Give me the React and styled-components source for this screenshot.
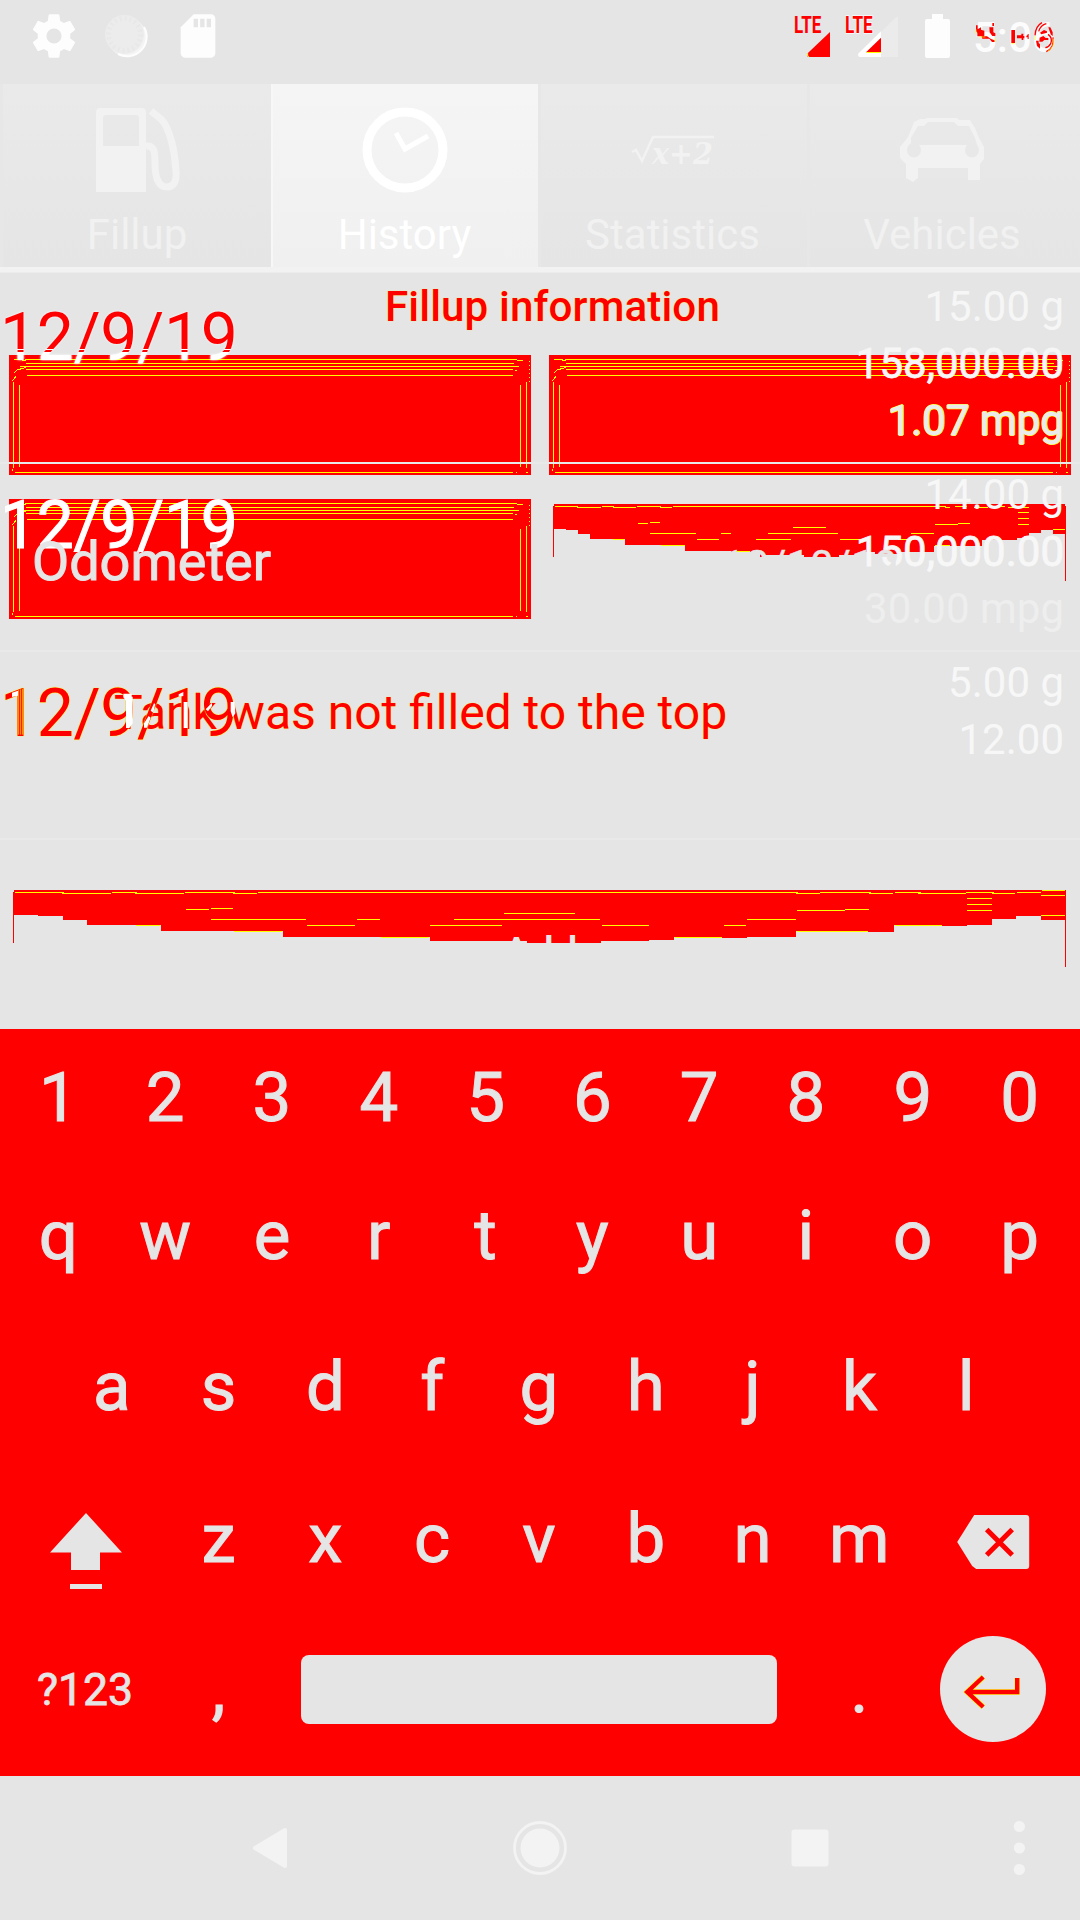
import React from "react";
import styled, { createGlobalStyle, css } from "styled-components";

const GREY = "#e5e5e5";
const RED = "#ff0000";
const YELLOW = "#ffff00";

const Global = createGlobalStyle`
  html, body { margin: 0; padding: 0; background: ${GREY}; }
  * { box-sizing: border-box; }
`;

const Screen = styled.div`
  width: 1080px;
  height: 1920px;
  display: flex;
  flex-direction: column;
  overflow: hidden;
  background: ${GREY};
  font-family: Roboto, "Noto Sans", sans-serif;
`;

/* status bar */
const StatusBar = styled.header`
  height: 84px;
  display: flex;
  justify-content: space-between;
`;
const Drawing = styled.svg`
  display: block;
  flex: none;
`;
const StatusRight = styled.div`
  display: flex;
  width: 300px;
`;
const Clock = styled.div`
  position: relative;
  width: 120px;
  padding-left: 13px;
  font-size: 42px;
  font-weight: 500;
  line-height: 76px;
  color: #fcfcfc;
  white-space: nowrap;
`;
const ClockMarks = styled.svg`
  position: absolute;
  left: 0;
  top: 0;
`;

/* tabs */
const Tabs = styled.nav`
  height: 192px;
  display: grid;
  grid-template-columns: 271px 267px 269px 273px;
  grid-template-rows: 183px 6px;
`;
const Tab = styled.div`
  display: flex;
  flex-direction: column;
  align-items: center;
  padding: 23px ${(p) => p.$right || 0}px 0 0;
  font-size: 42px;
  line-height: 50px;
  color: ${(p) => (p.$active ? "#ffffff" : "#f1f1f1")};
  background: ${(p) =>
    p.$active
      ? "linear-gradient(#f5f5f5, #f0f0f0)"
      : "linear-gradient(#eaeaea, #e7e7e7 60%, #e5e5e5)"};
  border-left: ${(p) => (p.$active ? "2px solid #f7f7f7" : "3px solid #e7e7e7")};
`;
const TabLabel = styled.span`
  margin-top: 17px;
`;
const Underline = styled.div`
  grid-column: 1 / -1;
  background: #f2f2f2;
  border-bottom: 1px solid #ececec;
`;

/* content */
const Content = styled.main`
  position: relative;
  height: 753px;
`;
const Form = styled.section`
  display: flex;
  flex-direction: column;
`;
const Title = styled.h1`
  margin: 0;
  height: 79px;
  padding: 6px 0 0 385px;
  font-size: 42px;
  font-weight: 500;
  line-height: 49px;
  letter-spacing: 0.2px;
  color: ${RED};
  text-shadow: 0 0 1px ${YELLOW};
  white-space: nowrap;
`;
const Fields = styled.div`
  display: grid;
  grid-template-columns: 522px 522px;
  grid-auto-rows: 120px;
  gap: 24px 18px;
  padding-left: 9px;
`;
const Cell = styled.div`
  display: grid;
  > * { grid-area: 1 / 1; }
`;
const FieldLabel = styled.span`
  z-index: 1;
  padding: 1px 0 0 23px;
  font-size: 54px;
  font-weight: 400;
  -webkit-text-stroke: 1px ${GREY};
  line-height: 123px;
  color: ${GREY};
`;
const DateLabel = styled.span`
  z-index: 1;
  text-align: center;
  font-size: 42px;
  line-height: 134px;
  color: ${GREY};
  -webkit-text-stroke: 0.4px ${GREY};
`;
const Note = styled.p`
  margin: 0;
  height: 271px;
  padding: 66px 0 0 114px;
  font-size: 48px;
  line-height: 56px;
  color: ${RED};
  text-shadow: 0 0 1px ${YELLOW};
  white-space: nowrap;
`;
const AddLabel = styled.span`
  z-index: 1;
  text-align: center;
  font-size: 42px;
  font-weight: 500;
  line-height: 126px;
  color: ${GREY};
`;

const List = styled.ul`
  position: absolute;
  inset: 0;
  margin: 0;
  padding: 0;
  list-style: none;
`;
const Row = styled.li`
  height: 188px;
  display: flex;
  justify-content: space-between;
  padding: 2px 16px 0 0;
  border-bottom: 2px solid #e9e9e9;
`;
const tones = {
  mixed: css`
    color: transparent;
    background: linear-gradient(${RED} 0 50px, #fff 50px 51px, ${RED} 51px 53px, #fff 53px);
    -webkit-background-clip: text;
    background-clip: text;
    filter: drop-shadow(0 0 0.8px #fff);
  `,
  white: css`
    color: #fff;
    -webkit-text-stroke: 1px #fff;
  `,
  red: css`
    color: ${RED};
    text-shadow: 0 0 1px ${YELLOW}, 0 0 1px ${YELLOW};
  `,
};
const RowDate = styled.div`
  height: 80px;
  margin-top: 21px;
  font-size: 66px;
  line-height: 78px;
  letter-spacing: -0.35px;
  ${(p) => tones[p.$tone]}
`;
const Values = styled.div`
  display: flex;
  flex-direction: column;
  align-items: flex-end;
  font-size: 42px;
  line-height: 57px;
`;
const Value = styled.span`
  color: ${(p) => p.$color};
  ${(p) => p.$bold && css`-webkit-text-stroke: 0.8px ${p.$color};`}
  ${(p) =>
    p.$glow &&
    css`
      text-shadow: 1px 0 0 ${YELLOW}, -1px 0 0 ${YELLOW}, 0 1px 0 ${YELLOW}, 0 -1px 0 ${YELLOW};
    `}
`;
const Overlaps = styled.svg`
  position: absolute;
  left: 0;
  top: 404px;
`;

/* keyboard */
const Keyboard = styled.section`
  height: 747px;
  background: ${RED};
  color: ${GREY};
  padding: 0 7px 0 5px;
`;
const KeyRow = styled.div`
  display: flex;
  align-items: center;
  height: ${(p) => p.$h}px;
  padding: 0 ${(p) => p.$inset || 0}px;
`;
const Key = styled.div`
  flex: none;
  width: ${(p) => (p.$wide ? 160.2 : 106.8)}px;
  display: flex;
  justify-content: center;
  align-items: center;
  font-size: ${(p) => (p.$small ? 44.5 : 69)}px;
  line-height: 82px;
  padding-top: ${(p) => (p.$small ? 2 : 0)}px;
  -webkit-text-stroke: ${(p) => (p.$small ? 0.8 : 1)}px ${GREY};
`;
const Space = styled.div`
  width: 476px;
  height: 69px;
  margin: 0 29px;
  border-radius: 8px;
  background: ${GREY};
`;
const Enter = styled.div`
  width: 106px;
  height: 106px;
  border-radius: 50%;
  background: ${GREY};
`;

const NavBar = styled.footer`
  height: 144px;
`;

const Spinner = () => (
  <Drawing width="522" height="120" viewBox="26 255 1516 360" preserveAspectRatio="none" shapeRendering="crispEdges">
    <rect x="26" y="255" width="1516" height="360" fill={RED} />
    <g fill="none" stroke={YELLOW} strokeWidth="3">
      <path d="M40 268.500H64V271H75V268.500H1493L1505 271H1520M75 280.500H1493M58 289.500H1506M75 298.500H1490M78 316.500H1490M78 607.500H1490M44 607.500H78M1498 607.500H1502M1527 607.500H1532" />
      <path d="M40 336V594M56.500 345V591M1511.500 345V591M1528.500 336V594M36 604V598M36 332L46 320M40 310L50 300L75 292M1495 300H1502" />
      <path d="M1537.500 272V335" strokeDasharray="4 8" />
    </g>
  </Drawing>
);

const rows = [
  {
    tone: "mixed",
    values: [
      { text: "15.00 g", color: "#f6f6f6" },
      { text: "158,000.00", color: "#f6f6f6", bold: true },
      { text: "1.07 mpg", color: "#ebebeb", glow: true, bold: true },
    ],
  },
  {
    tone: "white",
    values: [
      { text: "14.00 g", color: "#f7f7f7" },
      { text: "150,000.00", color: "#f7f7f7", bold: true },
      { text: "30.00 mpg", color: "#eeeeee" },
    ],
  },
  {
    tone: "red",
    values: [
      { text: "5.00 g", color: "#f7f7f7" },
      { text: "12.00", color: "#f7f7f7" },
    ],
  },
];

export default function App() {
  return (
    <Screen>
      <Global />
      <StatusBar>
        <Drawing width="300" height="84" viewBox="0 0 300 84">
          <g transform="translate(28 10) scale(2.167)" fill="#fdfdfd">
            <path d="M19.430 12.980c.04-.32.07-.64.07-.98s-.03-.66-.07-.98l2.110-1.650c.19-.15.24-.42.12-.64l-2-3.460c-.12-.22-.39-.3-.61-.22l-2.490 1c-.52-.4-1.080-.73-1.690-.98l-.38-2.650C14.460 2.180 14.250 2 14 2h-4c-.25 0-.46.18-.49.42l-.38 2.650c-.61.25-1.170.59-1.690.98l-2.490-1c-.23-.09-.49 0-.61.22l-2 3.460c-.13.22-.07.49.12.64l2.110 1.650c-.04.32-.07.65-.07.98s.03.66.07.98l-2.110 1.650c-.19.15-.24.42-.12.64l2 3.460c.12.22.39.3.61.22l2.490-1c.52.4 1.080.73 1.690.98l.38 2.650c.03.24.24.42.49.42h4c.25 0 .46-.18.49-.42l.38-2.650c.61-.25 1.170-.59 1.690-.98l2.490 1c.23.09.49 0 .61-.22l2-3.460c.12-.22.07-.49-.12-.64zM12 15.500A3.500 3.500 0 1 1 12 8.500a3.500 3.500 0 0 1 0 7z" />
          </g>
          <circle cx="127" cy="37" r="19.500" fill="#f4f4f4" />
          <path d="M144 27A19.500 19.500 0 0 1 118 54" stroke="#fdfdfd" strokeWidth="2" fill="none" />
          <circle cx="124.500" cy="34.500" r="19.500" fill="#ececec" />
          <circle cx="124.500" cy="34.500" r="16" fill="none" stroke="#e8e8e8" strokeWidth="5" strokeDasharray="2 3" />
          <g transform="translate(172 10) scale(2.167)">
            <path d="M18 2h-8L4.020 8 4 20c0 1.100.9 2 2 2h12c1.100 0 2-.9 2-2V4c0-1.100-.9-2-2-2z" fill="#fdfdfd" />
            <path d="M12 8h-2V4h2zM15 8h-2V4h2zM18 8h-2V4h2z" fill={GREY} />
          </g>
        </Drawing>
        <StatusRight>
          <Drawing width="180" height="84" viewBox="0 0 540 252">
            <g fill={RED} fontFamily="Roboto, sans-serif" fontWeight="700" fontSize="73">
              <text x="42" y="99" textLength="82" lengthAdjust="spacingAndGlyphs">LTE</text>
              <text x="195" y="99" textLength="83" lengthAdjust="spacingAndGlyphs" stroke="#fafafa" strokeWidth="5" paintOrder="stroke">LTE</text>
            </g>
            <path d="M83 171V160L150 96V171Z" fill={RED} />
            <path d="M83 160V166L87 171" stroke={YELLOW} strokeWidth="3" fill="none" />
            <path d="M303 96L350 50H354V171H303Z" fill="#ebebeb" />
            <path d="M238 171Q232 168 236 160L303 94V171Z" fill="#ffffff" />
            <path d="M258 157L303 113V157Z" fill={RED} />
            <path d="M260 157.500H303" stroke={YELLOW} strokeWidth="3" />
            <path d="M456 42H489V57H504Q510 57 510 63V168Q510 174 504 174H441Q435 174 435 168V63Q435 57 441 57H456Z" fill="#fdfdfd" />
          </Drawing>
          <Clock>
            5:06
            <ClockMarks width="120" height="84" viewBox="540 0 360 252">
              <g fill={RED}>
                <path d="M588 76H593V88L603 82V89L613 92V109H592V98L588 94ZM628 82H640V97L646 100V108H637L629 97ZM637 69H642V78H637ZM605 109H621L633 117L644 121V126H636L628 116H607ZM694 90H705V129H694ZM711 106H724V101H730V108H733V115H730V120H725V115H711ZM739 108L743 105V102H746V117H743V112H739ZM805 82H811L818 97V109L812 103ZM768 122H776V129L780 132V146L771 138ZM780 98L792 90L801 94V98L784 103ZM779 113L790 108L797 114H805V120H793L787 125H778Z" />
              </g>
              <g fill="none" stroke={RED} strokeWidth="4">
                <path d="M786 68Q767 78 765 106M799 71Q782 75 776 94M804 103Q819 113 812 131Q806 142 796 143M819 112Q824 143 799 155" />
              </g>
              <g fill="none" stroke={YELLOW} strokeWidth="2">
                <path d="M588 88V101M598 111H616M645 115V125M803 154Q823 143 821 116M765 108V120M694 131H704" />
              </g>
            </ClockMarks>
          </Clock>
        </StatusRight>
      </StatusBar>

      <Tabs>
        <Tab>
          <Drawing width="86" height="86" viewBox="94 107 86 86">
            <path d="M100 108H142Q146 108 146 113V192H96V113Q96 108 100 108ZM106 115Q103 115 103 119V146H139V119Q139 115 136 115Z" fill="#f2f2f2" fillRule="evenodd" />
            <path d="M146 146C154 145 155 151 155 163C155 178 158 187 167 187C174 187 177 181 176 171C175 152 170 128 161 119L151 111" fill="none" stroke="#f2f2f2" strokeWidth="7" />
          </Drawing>
          <TabLabel>Fillup</TabLabel>
        </Tab>
        <Tab $active $right={2}>
          <Drawing width="86" height="86" viewBox="0 0 86 86">
            <circle cx="43" cy="43" r="38" fill="none" stroke="#fff" strokeWidth="9" />
            <path d="M34 26L43 42L66 29" fill="none" stroke="#fff" strokeWidth="5" />
          </Drawing>
          <TabLabel>History</TabLabel>
        </Tab>
        <Tab $right={3}>
          <Drawing width="86" height="86" viewBox="0 0 86 86">
            <path d="M2 45L6 43L12 54L23 30H84" fill="none" stroke="#f2f2f2" strokeWidth="2.500" />
            <text x="22" y="57" textLength="61" lengthAdjust="spacingAndGlyphs" fontFamily="DejaVu Serif, serif" fontStyle="italic" fontWeight="700" fontSize="30" fill="#f2f2f2">x+2</text>
          </Drawing>
          <TabLabel>Statistics</TabLabel>
        </Tab>
        <Tab $right={6}>
          <Drawing width="86" height="86" viewBox="899 107 86 86">
            <path d="M926 118H957L959 120H970L975 128L979 138L984 147V159L980 164V180H968V168H918V178L913 182L906 178V164L900 158V147L908 137L914 122L920 119H926ZM918 126L911 138V145H977L975 138L969 126H958L954 122H928L924 126Z" fill="#f2f2f2" fillRule="evenodd" />
            <ellipse cx="914" cy="150" rx="7" ry="7.500" fill="#e8e8e8" />
            <ellipse cx="972" cy="150" rx="7" ry="7.500" fill="#e8e8e8" />
          </Drawing>
          <TabLabel>Vehicles</TabLabel>
        </Tab>
        <Underline />
      </Tabs>

      <Content>
        <Form>
          <Title>Fillup information</Title>
          <Fields>
            <Spinner />
            <Spinner />
            <Cell>
              <Spinner />
              <FieldLabel>Odometer</FieldLabel>
            </Cell>
            <Cell>
              <Drawing width="522" height="120" viewBox="26 687 1516 360" preserveAspectRatio="none" shapeRendering="crispEdges">
                <path fill={RED} d="M38 708H41V702H1524V708H1527V932H1524V791H1490V780H1455V788H1420V797H1405V803H1385V809H1283V827H1144V845H1045V851H973V845H942V854H868V860H767V854H648V860H640V845H555V842H421V824H247V806H145V791H110V779H75V776H41V860H38Z" />
                <path fill="none" stroke={YELLOW} strokeWidth="3" d="M44 709.500H110V712H177M180 709.500H213V712H279M282 709.500H351V712H383M386 709.500H1177V712H1190M1205 709.500H1240M1260 712H1300M1310 709.500H1350M1360 712H1420M285 760.500H314M319 757.500H348M735 772.500H830M319 790.500H453M526 790.500H555M662 790.500H865M456 808.500H520M627 808.500H729M870 808.500H935M211 808.500H244M351 826.500H421M563 844.500H610M1078 790.500H1144M1147 763.500H1214M1214 760.500H1249M1388 727.500H1420M1388 745.500H1420M1388 763.500H1420M1490 778.500H1524M1040 808.500H1070M1147 826.500H1190" />
              </Drawing>
              <DateLabel>12/10/19</DateLabel>
            </Cell>
          </Fields>
          <Note>Tank was not filled to the top</Note>
          <Cell>
            <Drawing width="1080" height="80" viewBox="0 780 1568 240" preserveAspectRatio="none" shapeRendering="crispEdges">
              <path fill={RED} d="M19 786H20V780H1547V1011H1545.600V870H1511V857H1475V866H1440V884H1404V887H1368V885H1298V906H1260V903H1156V920H1085V923H1048V921H979V930H942V933H873V939H765V933H624V921H411V903H234V885H126V870H91V858H55V855H20V939H18.500Z" />
              <path fill="none" stroke={YELLOW} strokeWidth="3" d="M22 787.500H92V790.500H161M163 787.500H198V790.500H267M269 787.500H340V790.500H373M375 787.500H1157V790.500H1191M1191 787.500H1263V790.500H1297M1299 787.500H1335V790.500H1402M1402 787.500H1442V790.500H1474M1476 787.500H1511M1513 781.500H1546M1511 796.500H1546M1511 856.500H1546M270 838.500H303M306 835.500H338M732 850.500H835M306 868.500H444M518 868.500H552M659 868.500H871M446 886.500H515M624 886.500H729M874 886.500H942M1051 886.500H1083M1085 868.500H1156M1157 841.500H1227M1227 838.500H1262M1404 805.500H1440M1404 823.500H1440M1404 841.500H1440M198 886.500H232M340 904.500H410M553 922.500H623M980 922.500H1048M1157 904.500H1260M1299 886.500H1368" />
            </Drawing>
            <AddLabel>Add</AddLabel>
          </Cell>
        </Form>
        <List>
          {rows.map((r) => (
            <Row key={r.tone}>
              <RowDate $tone={r.tone}>12/9/19</RowDate>
              <Values>
                {r.values.map((v) => (
                  <Value key={v.text} $color={v.color} $bold={v.bold} $glow={v.glow}>{v.text}</Value>
                ))}
              </Values>
            </Row>
          ))}
        </List>
        <Overlaps width="300" height="70" viewBox="0 0 900 210">
          <g fill="#fff">
            <path d="M36 38L54 32V47L36 51ZM370 41H395V50H398V130L388 144H378V62L370 52ZM551 66H563V144H551ZM432 130L446 108L452 113L441 143H432ZM452 92L462 70L466 72L460 98ZM617 88L636 68V78L624 94ZM692 66H704L706 100L698 112L692 94ZM536 43L550 36V48L536 50Z" />
          </g>
          <path d="M56 30V164M62 28V164M68 26V164" stroke={YELLOW} strokeWidth="2" />
        </Overlaps>
      </Content>

      <Keyboard>
        <KeyRow $h={138}>{[..."1234567890"].map((k) => <Key key={k}>{k}</Key>)}</KeyRow>
        <KeyRow $h={138}>{[..."qwertyuiop"].map((k) => <Key key={k}>{k}</Key>)}</KeyRow>
        <KeyRow $h={164} $inset={53.4}>{[..."asdfghjkl"].map((k) => <Key key={k}>{k}</Key>)}</KeyRow>
        <KeyRow $h={140}>
          <Key $wide>
            <Drawing width="160" height="140" viewBox="5 1469 160 140">
              <path d="M86 1513L122 1552.500H100V1570H71V1552.500H50ZM70 1584H102V1589H70Z" fill={GREY} />
            </Drawing>
          </Key>
          {[..."zxcvbnm"].map((k) => <Key key={k}>{k}</Key>)}
          <Key $wide>
            <Drawing width="160" height="140" viewBox="912.800 1469 160 140">
              <path d="M957 1542L974 1515H1026Q1029 1515 1029 1518V1566Q1029 1569 1026 1569H976L972 1566Z" fill={GREY} />
              <path d="M986.500 1529.500L1012 1555M1012 1529.500L986.500 1555" stroke={RED} strokeWidth="5" />
            </Drawing>
          </Key>
        </KeyRow>
        <KeyRow $h={160}>
          <Key $wide $small>?123</Key>
          <Key>,</Key>
          <Space />
          <Key>.</Key>
          <Key $wide>
            <Enter>
              <Drawing width="106" height="106" viewBox="939.800 1636 106 106">
                <g fill="none" strokeLinejoin="miter">
                  <path d="M983 1677L967 1692L983 1707M968 1692H1017V1678" stroke={YELLOW} strokeWidth="5.500" />
                  <path d="M983 1677L967 1692L983 1707M968 1692H1017V1678" stroke={RED} strokeWidth="4.400" />
                </g>
              </Drawing>
            </Enter>
          </Key>
        </KeyRow>
      </Keyboard>

      <NavBar>
        <Drawing width="1080" height="144" viewBox="0 1776 1080 144" fill="#f3f3f3">
          <path d="M255 1848L285 1830V1866Z" stroke="#f3f3f3" strokeWidth="4" strokeLinejoin="round" />
          <circle cx="540" cy="1848" r="19.500" />
          <circle cx="540" cy="1848" r="25.500" fill="none" stroke="#f3f3f3" strokeWidth="2.800" />
          <rect x="791.500" y="1829.500" width="37" height="37" rx="3" />
          <circle cx="1019.400" cy="1826.500" r="5.600" />
          <circle cx="1019.400" cy="1848" r="5.600" />
          <circle cx="1019.400" cy="1869.500" r="5.600" />
        </Drawing>
      </NavBar>
    </Screen>
  );
}
